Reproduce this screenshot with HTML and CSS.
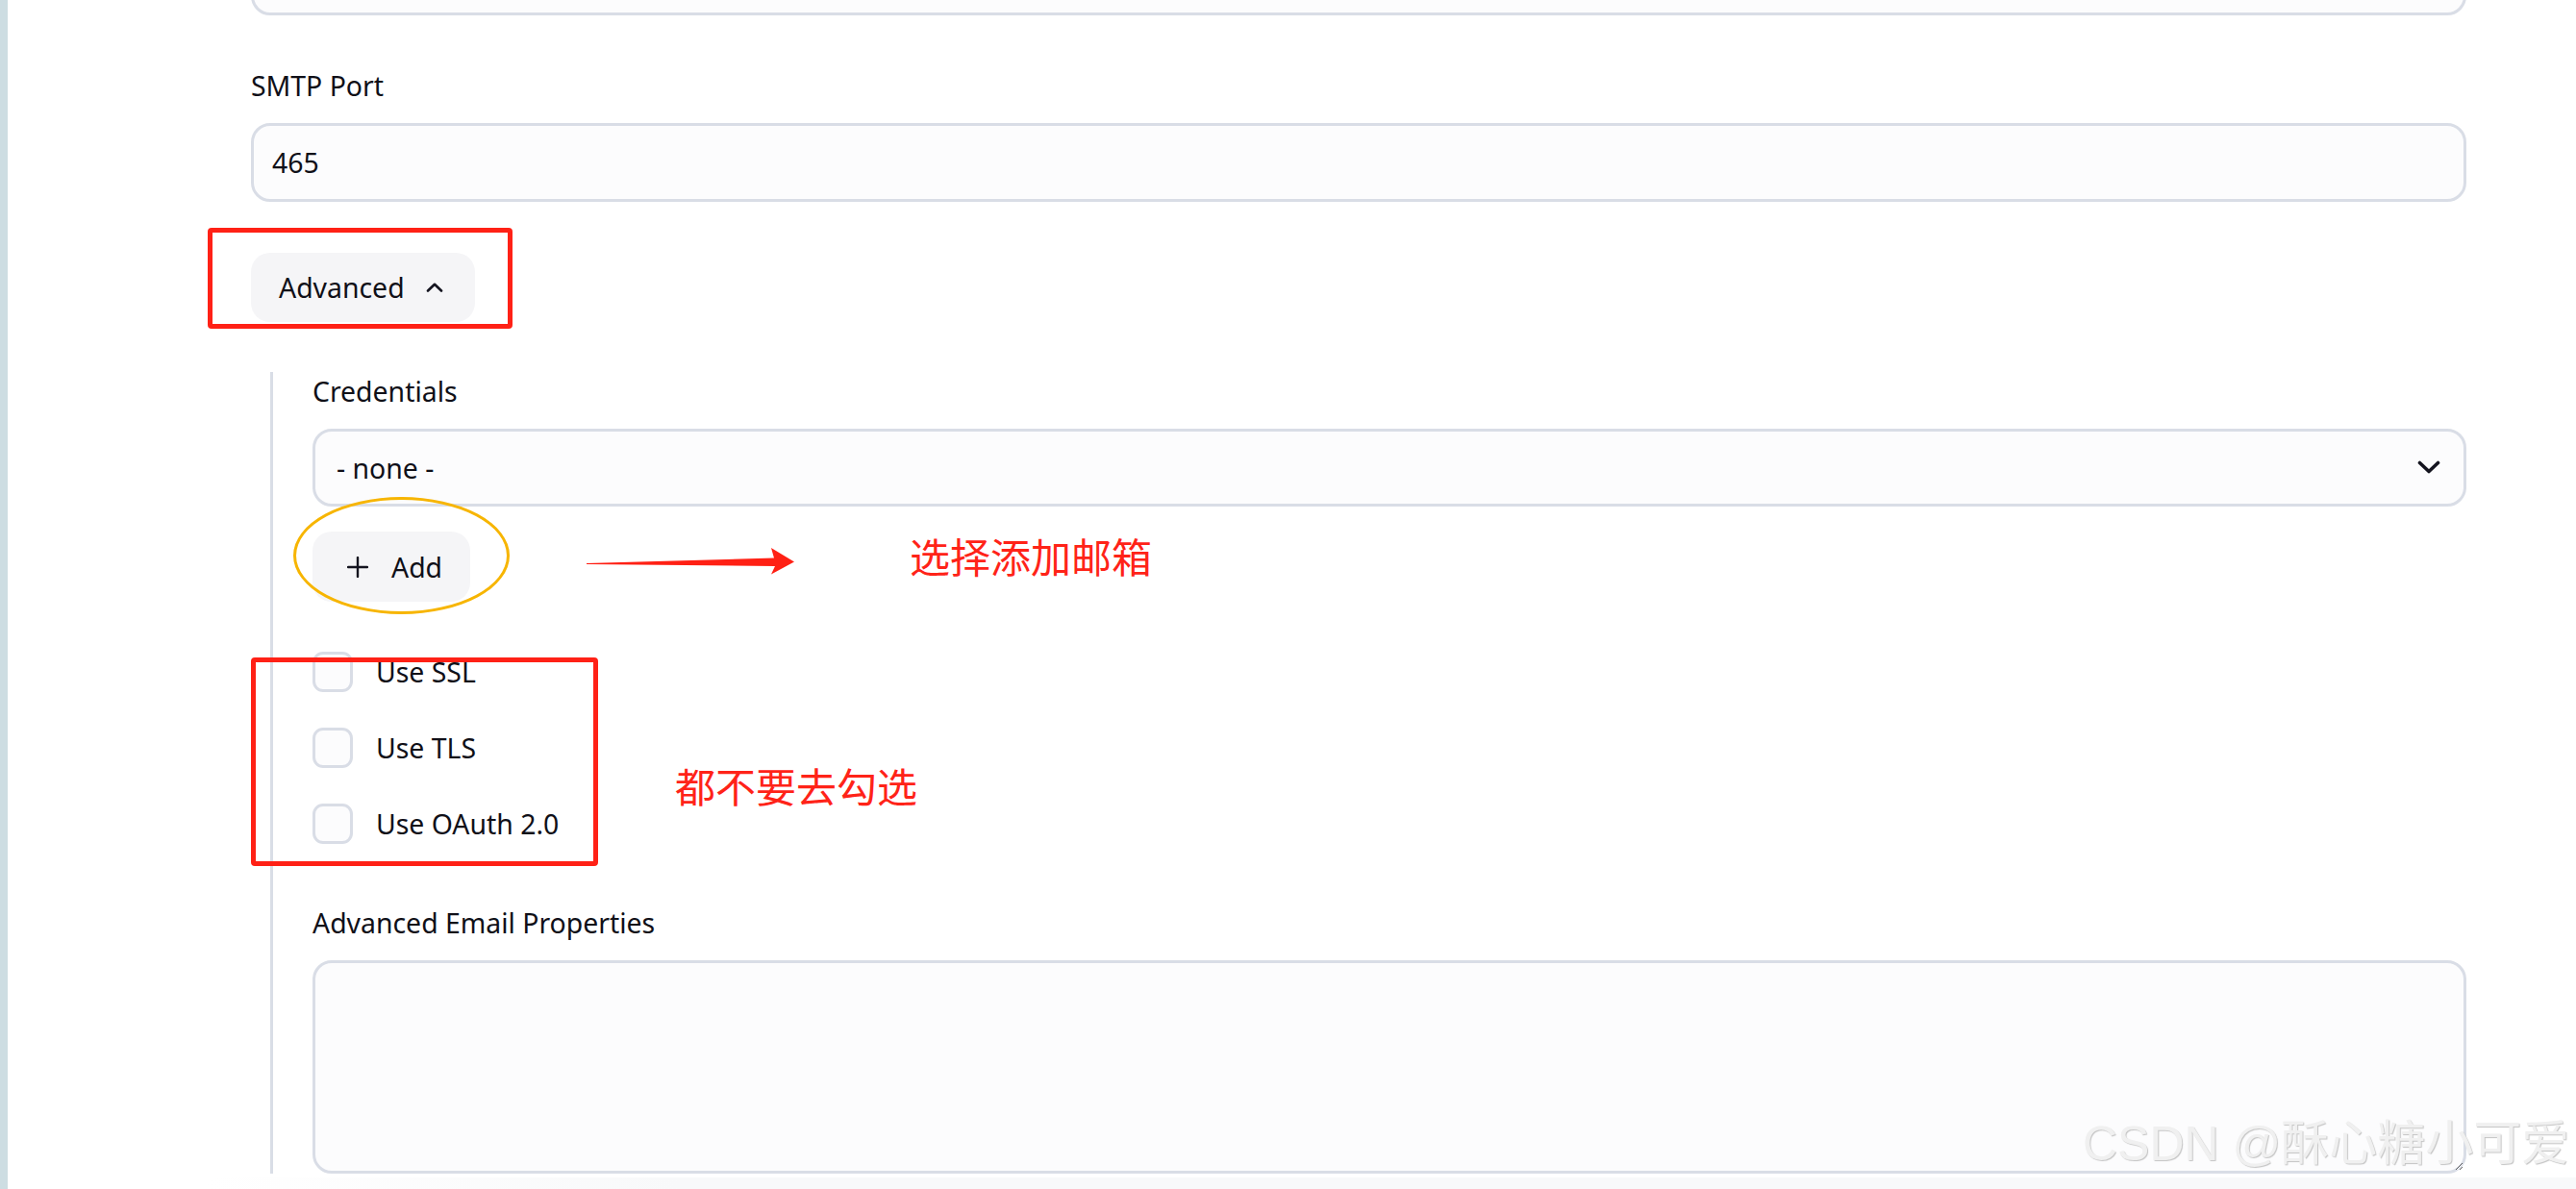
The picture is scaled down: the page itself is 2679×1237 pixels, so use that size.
FILE: index.html
```html
<!DOCTYPE html>
<html>
<head>
    <title>Extended E-mail Notification</title>
    <link rel="stylesheet" href="styles.css">
</head>
<body>
    <div class="page">
        <div class="rail"></div>
        <div class="main">
            <div class="form">
                <input class="input cut" type="text">

                <div class="field">
                    <label class="label">SMTP Port</label>
                    <input class="input" type="text" value="465">
                </div>

                <button class="btn advanced">
                    <span>Advanced</span>
                    <svg width="18" height="10" viewBox="0 0 18 10"><path d="M2 8.5 L9 1.8 L16 8.5" fill="none" stroke="#14141f" stroke-width="2.6" stroke-linecap="round" stroke-linejoin="round"/></svg>
                </button>

                <div class="nested">
                    <label class="label">Credentials</label>
                    <div class="select">
                        <span>- none -</span>
                        <svg width="24" height="15" viewBox="0 0 24 15"><path d="M2.5 2.5 L12 11.5 L21.5 2.5" fill="none" stroke="#14141f" stroke-width="3.6" stroke-linecap="round" stroke-linejoin="round"/></svg>
                    </div>
                    <button class="btn add">
                        <svg width="22" height="22" viewBox="0 0 22 22"><path d="M11 1 V21 M1 11 H21" fill="none" stroke="#14141f" stroke-width="2.4" stroke-linecap="round"/></svg>
                        <span>Add</span>
                    </button>

                    <div class="checks">
                        <label class="check"><input type="checkbox"><span>Use SSL</span></label>
                        <label class="check"><input type="checkbox"><span>Use TLS</span></label>
                        <label class="check"><input type="checkbox"><span>Use OAuth 2.0</span></label>
                    </div>

                    <label class="label props">Advanced Email Properties</label>
                    <textarea class="textarea"></textarea>
                </div>
            </div>
            <div class="bottom-bar"></div>
        </div>

        <!-- annotations drawn on top of the screenshot -->
        <div class="mark box-advanced"></div>
        <div class="mark box-checks"></div>
        <div class="mark ring-add"></div>
        <svg class="arrow" width="240" height="50" viewBox="0 0 240 50"><polygon points="10,26 205,20.5 202,10 226,24.5 202,37.5 206,29 10,27" fill="#ff2014"/></svg>
        <div class="note note-add">选择添加邮箱</div>
        <div class="note note-checks">都不要去勾选</div>
        <div class="watermark">CSDN @酥心糖小可爱</div>
    </div>
</body>
</html>
```

FILE: styles.css
```css
body {
    margin: 0;
    padding: 0;
    background-color: #ffffff;
    font-family: "Noto Sans", "Open Sans", sans-serif;
    color: #101018;
    overflow: hidden;
}

.page {
    position: relative;
    display: flex;
    height: 1237px;
}

.rail {
    width: 8px;
    flex-shrink: 0;
    background-color: #cddde2;
}

.main {
    flex: 1;
}

.form {
    margin-left: 253px;
    width: 2304px;
}

.label {
    display: block;
    font-size: 28.4px;
    line-height: 40px;
    margin-bottom: 19px;
}

.input {
    display: block;
    box-sizing: border-box;
    width: 100%;
    height: 82px;
    padding: 0 19px;
    font-family: inherit;
    font-size: 28.4px;
    color: #101018;
    background-color: #fcfcfd;
    border: 3px solid #d9dde6;
    border-radius: 20px;
    outline: none;
}

.input.cut {
    margin-top: -66px;
}

.field {
    margin-top: 53px;
}

.btn {
    display: flex;
    align-items: center;
    font-family: inherit;
    font-size: 28.4px;
    color: #101018;
    background-color: #f5f5f7;
    border: none;
    border-radius: 20px;
}

.advanced {
    margin-top: 53px;
    height: 72px;
    padding: 0 33px 0 29px;
    gap: 22px;
}

.nested {
    margin-top: 52px;
    margin-left: 20px;
    padding-left: 41px;
    border-left: 3px solid #d9dde6;
}

.select {
    box-sizing: border-box;
    height: 81px;
    display: flex;
    align-items: center;
    justify-content: space-between;
    padding: 0 24px 0 22px;
    font-size: 28.4px;
    background-color: #fcfcfd;
    border: 3px solid #d9dde6;
    border-radius: 20px;
}

.add {
    margin-top: 26px;
    height: 73px;
    padding: 0 29px 0 36px;
    gap: 24px;
}

.checks {
    margin-top: 52px;
    display: flex;
    flex-direction: column;
    gap: 37px;
}

.check {
    display: flex;
    align-items: center;
    gap: 24px;
    height: 42px;
    font-size: 28.4px;
}

.check input {
    appearance: none;
    margin: 0;
    width: 42px;
    height: 42px;
    box-sizing: border-box;
    background-color: #fcfcfd;
    border: 3px solid #d9dde6;
    border-radius: 11px;
}

.props {
    margin-top: 62px;
}

.textarea {
    display: block;
    box-sizing: border-box;
    width: 100%;
    height: 222px;
    margin: 0;
    background-color: #fcfcfd;
    border: 3px solid #d9dde6;
    border-radius: 20px;
    outline: none;
}

.bottom-bar {
    margin-top: 4px;
    margin-left: 207px;
    height: 20px;
    background: linear-gradient(to right, #ffffff, #f8f9fa 20%);
}

/* annotation layer */
.mark {
    position: absolute;
    box-sizing: border-box;
}

.box-advanced {
    left: 216px;
    top: 237px;
    width: 317px;
    height: 105px;
    border: 5px solid #ff2116;
    border-radius: 4px;
}

.box-checks {
    left: 261px;
    top: 684px;
    width: 361px;
    height: 217px;
    border: 5px solid #ff2116;
    border-radius: 4px;
}

.ring-add {
    left: 305px;
    top: 517px;
    width: 225px;
    height: 122px;
    border: 3px solid #f7b500;
    border-radius: 50%;
}

.arrow {
    position: absolute;
    left: 600px;
    top: 560px;
}

.note {
    position: absolute;
    font-family: "Noto Sans CJK SC", sans-serif;
    font-size: 42px;
    line-height: 42px;
    color: #ff2318;
    white-space: nowrap;
}

.note-add {
    left: 946px;
    top: 557px;
}

.note-checks {
    left: 702px;
    top: 796px;
}

.watermark {
    position: absolute;
    left: 2166px;
    top: 1160px;
    font-family: "Liberation Sans", "Noto Sans CJK SC", sans-serif;
    font-size: 50px;
    line-height: 60px;
    color: #f0f0f0;
    text-shadow: 1px 1px 1px #c4c4c4;
    white-space: nowrap;
}
```
